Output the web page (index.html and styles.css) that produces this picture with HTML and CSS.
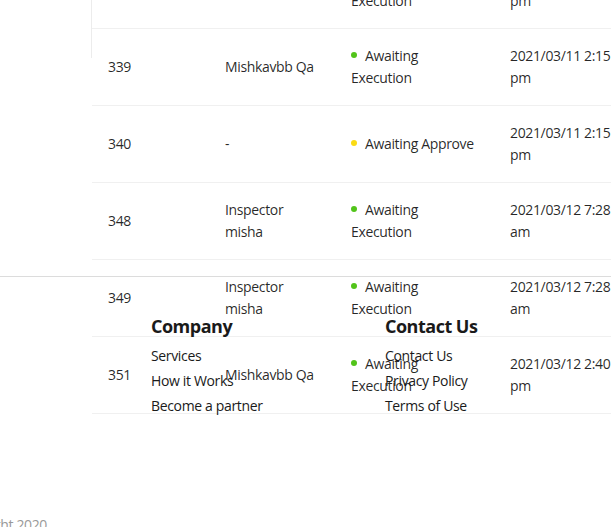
FILE: index.html
```html
<!DOCTYPE html>
<html>
<head>
<meta charset="utf-8">
<link rel="stylesheet" href="styles.css">
</head>
<body>
<div class="page">
  <div class="sidebar-edge"></div>
  <div class="content">
    <table class="orders">
      <colgroup>
        <col class="c-id"><col class="c-name"><col class="c-status"><col class="c-date">
      </colgroup>
      <tbody>
        <tr>
          <td>338</td>
          <td>Mishkavbb Qa</td>
          <td><span class="dot green"></span>Awaiting Execution</td>
          <td>2021/03/11 2:15 pm</td>
        </tr>
        <tr>
          <td>339</td>
          <td>Mishkavbb Qa</td>
          <td><span class="dot green"></span>Awaiting Execution</td>
          <td>2021/03/11 2:15 pm</td>
        </tr>
        <tr>
          <td>340</td>
          <td>-</td>
          <td><span class="dot yellow"></span>Awaiting Approve</td>
          <td>2021/03/11 2:15 pm</td>
        </tr>
        <tr>
          <td>348</td>
          <td>Inspector misha</td>
          <td><span class="dot green"></span>Awaiting Execution</td>
          <td>2021/03/12 7:28 am</td>
        </tr>
        <tr>
          <td>349</td>
          <td>Inspector misha</td>
          <td><span class="dot green"></span>Awaiting Execution</td>
          <td>2021/03/12 7:28 am</td>
        </tr>
        <tr>
          <td>351</td>
          <td>Mishkavbb Qa</td>
          <td><span class="dot green"></span>Awaiting Execution</td>
          <td>2021/03/12 2:40 pm</td>
        </tr>
      </tbody>
    </table>
  </div>
  <footer class="footer">
    <div class="footer-cols">
      <div class="footer-col">
        <h3 class="footer-title">Company</h3>
        <a class="footer-link">Services</a>
        <a class="footer-link">How it Works</a>
        <a class="footer-link">Become a partner</a>
      </div>
      <div class="footer-col">
        <h3 class="footer-title">Contact Us</h3>
        <a class="footer-link">Contact Us</a>
        <a class="footer-link">Privacy Policy</a>
        <a class="footer-link">Terms of Use</a>
      </div>
    </div>
    <div class="copyright">Copyright 2020</div>
  </footer>
</div>
</body>
</html>
```
FILE: styles.css
```css
html, body {
  margin: 0;
  padding: 0;
  background: #fff;
  overflow: hidden;
  width: 611px;
  height: 527px;
}
body {
  font-family: "Open Sans", "Noto Sans", sans-serif;
  font-size: 14px;
  letter-spacing: -0.35px;
  color: rgba(0, 0, 0, 0.85);
}
.page {
  position: relative;
  width: 611px;
  height: 527px;
  overflow: hidden;
}
.sidebar-edge {
  position: absolute;
  left: 91px;
  top: 0;
  width: 1px;
  height: 58px;
  background: #ececec;
}
.content {
  padding-left: 92px;
  margin-top: -48px;
}
.orders {
  border-collapse: collapse;
  table-layout: fixed;
  width: 540px;
  line-height: 22px;
}
.c-id { width: 117px; }
.c-name { width: 126px; }
.c-status { width: 159px; }
.c-date { width: 138px; }
.orders td {
  padding: 16px;
  border-bottom: 1px solid #f0f0f0;
  vertical-align: middle;
  overflow-wrap: break-word;
}
.dot {
  display: inline-block;
  width: 6px;
  height: 6px;
  border-radius: 50%;
  margin-right: 8px;
  vertical-align: middle;
  position: relative;
  top: -2px;
}
.dot.green { background: #52c41a; }
.dot.yellow { background: #fadb14; }

.footer {
  margin-top: -138px;
  border-top: 1px solid #dcdcdc;
  padding-top: 37px;
}
.footer-cols {
  display: flex;
  padding-left: 151px;
}
.footer-col {
  flex: 0 0 234px;
  display: flex;
  flex-direction: column;
}
.footer-title {
  margin: 0 0 5px;
  font-size: 18px;
  line-height: 24px;
  font-weight: 700;
  letter-spacing: -0.5px;
  color: #1a1a1a;
}
.footer-link {
  font-size: 14px;
  line-height: 25px;
  color: #1a1a1a;
}
.copyright {
  margin-top: 96px;
  margin-left: -47px;
  font-size: 14px;
  line-height: 22px;
  color: #999;
}
```
